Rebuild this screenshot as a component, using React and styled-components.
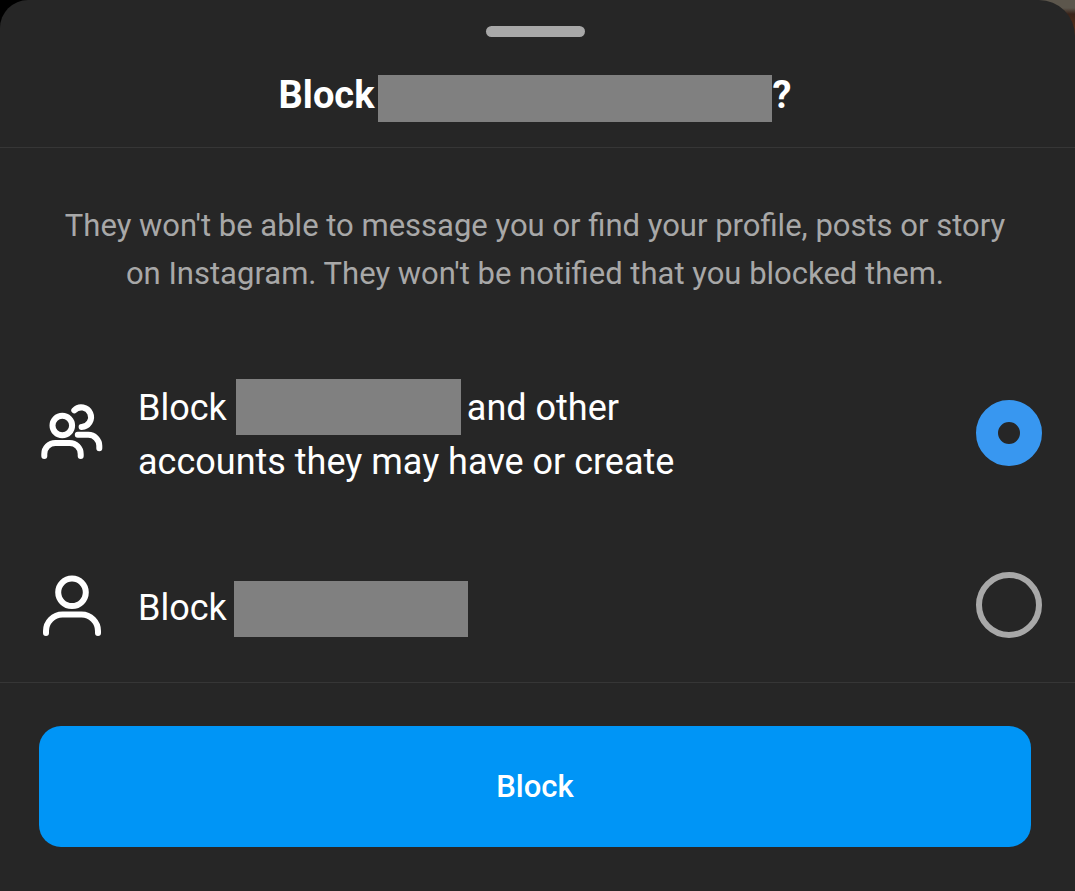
import React, { useState } from 'react'
import styled, { createGlobalStyle } from 'styled-components'

const App = () => {
  const [choice, setChoice] = useState('all')

  return (
    <Backdrop>
      <GlobalStyle />
      <Sheet>
        <Header>
          <Handle />
          <Title>
            Block
            <HiddenName $width={394} $height={47} />
            ?
          </Title>
        </Header>

        <Description>
          They won't be able to message you or find your profile, posts or story
          on Instagram. They won't be notified that you blocked them.
        </Description>

        <Options>
          <Option>
            <PeopleIcon />
            <OptionText>
              <NameLine>
                Block
                <HiddenName $width={225} $height={56} $gap={9} />
                and other
              </NameLine>
              accounts they may have or create
            </OptionText>
            <Radio
              type="radio"
              name="block"
              checked={choice === 'all'}
              onChange={() => setChoice('all')}
            />
          </Option>
          <Option>
            <PersonIcon />
            <OptionText>
              <NameLine $align="flex-start">
                Block
                <HiddenName $width={234} $height={56} $gap={7} />
              </NameLine>
            </OptionText>
            <Radio
              type="radio"
              name="block"
              checked={choice === 'one'}
              onChange={() => setChoice('one')}
            />
          </Option>
        </Options>

        <Footer>
          <BlockButton type="button">Block</BlockButton>
        </Footer>
      </Sheet>
    </Backdrop>
  )
}

const PeopleIcon = () => (
  <Icon viewBox="0 0 66 66" aria-hidden="true">
    <circle cx="23.3" cy="25.5" r="9.8" />
    <path d="M5.3 56V54a11 11 0 0 1 11-11h14.400a11 11 0 0 1 11 11V56" />
    <path d="M35.300 10.300A9.800 9.800 0 1 1 42.600 27" />
    <path d="M38.800 34.800h10.500a11 11 0 0 1 11 11V48.300" />
  </Icon>
)

const PersonIcon = () => (
  <Icon viewBox="0 0 66 66" aria-hidden="true">
    <circle cx="33" cy="20.3" r="13.8" />
    <path d="M7 61V59a16.500 16.500 0 0 1 16.500-16.500h19a16.500 16.500 0 0 1 16.500 16.500V61" />
  </Icon>
)

const GlobalStyle = createGlobalStyle`
  * {
    box-sizing: border-box;
  }

  body {
    margin: 0;
    background-color: #262626;
    font-family: Roboto, "Noto Sans", sans-serif;
  }
`

const Backdrop = styled.div`
  background:
    linear-gradient(to right, #000 50%, transparent 50%),
    linear-gradient(#5c564c 8px, #3a241a 14px, #5a3018 32px);
`

const Sheet = styled.main`
  min-height: 100vh;
  background-color: #262626;
  border-radius: 28px 36px 0 0;
  color: #fff;
`

const Header = styled.header`
  display: flex;
  flex-direction: column;
  align-items: center;
  padding: 26px 5px 25px 0;
  border-bottom: 1px solid #363636;
`

const Handle = styled.div`
  width: 99px;
  height: 11px;
  border-radius: 6px;
  background-color: #a8a8a8;
`

const Title = styled.h1`
  display: flex;
  align-items: flex-end;
  margin: 31px 0 0;
  font-size: 38px;
  font-weight: 700;
  line-height: 54px;
`

const HiddenName = styled.span`
  flex: none;
  width: ${(props) => props.$width}px;
  height: ${(props) => props.$height}px;
  margin-left: ${(props) => props.$gap || 4}px;
  margin-right: ${(props) => (props.$gap ? 6 : 0)}px;
  background-color: #808080;
`

const Description = styled.p`
  margin: 0;
  padding: 54px 49px 0 44px;
  color: #a8a8a8;
  font-size: 31px;
  line-height: 48px;
  text-align: center;
`

const Options = styled.div`
  display: flex;
  flex-direction: column;
  gap: 83px;
  padding: 78px 33px 44px 39px;
`

const Option = styled.label`
  display: flex;
  align-items: center;
  gap: 33px;
`

const Icon = styled.svg`
  flex: none;
  width: 66px;
  height: 66px;
  fill: none;
  stroke: #fff;
  stroke-width: 6;
  stroke-linecap: round;
  stroke-linejoin: round;
`

const OptionText = styled.div`
  flex: 1;
  padding-top: 5px;
  font-size: 36px;
  line-height: 54px;
`

const NameLine = styled.div`
  display: flex;
  align-items: ${(props) => props.$align || 'flex-end'};
  height: 54px;
`

const Radio = styled.input`
  appearance: none;
  flex: none;
  width: 66px;
  height: 66px;
  margin: 0;
  border: 6px solid #a8a8a8;
  border-radius: 50%;

  &:checked {
    border: 22px solid #3897f0;
  }
`

const Footer = styled.footer`
  padding: 43px 44px 44px 39px;
  border-top: 1px solid #363636;
`

const BlockButton = styled.button`
  display: block;
  width: 100%;
  height: 121px;
  border: none;
  border-radius: 22px;
  background-color: #0095f6;
  color: #fff;
  font-family: inherit;
  font-size: 31px;
  font-weight: 500;
`

export default App
